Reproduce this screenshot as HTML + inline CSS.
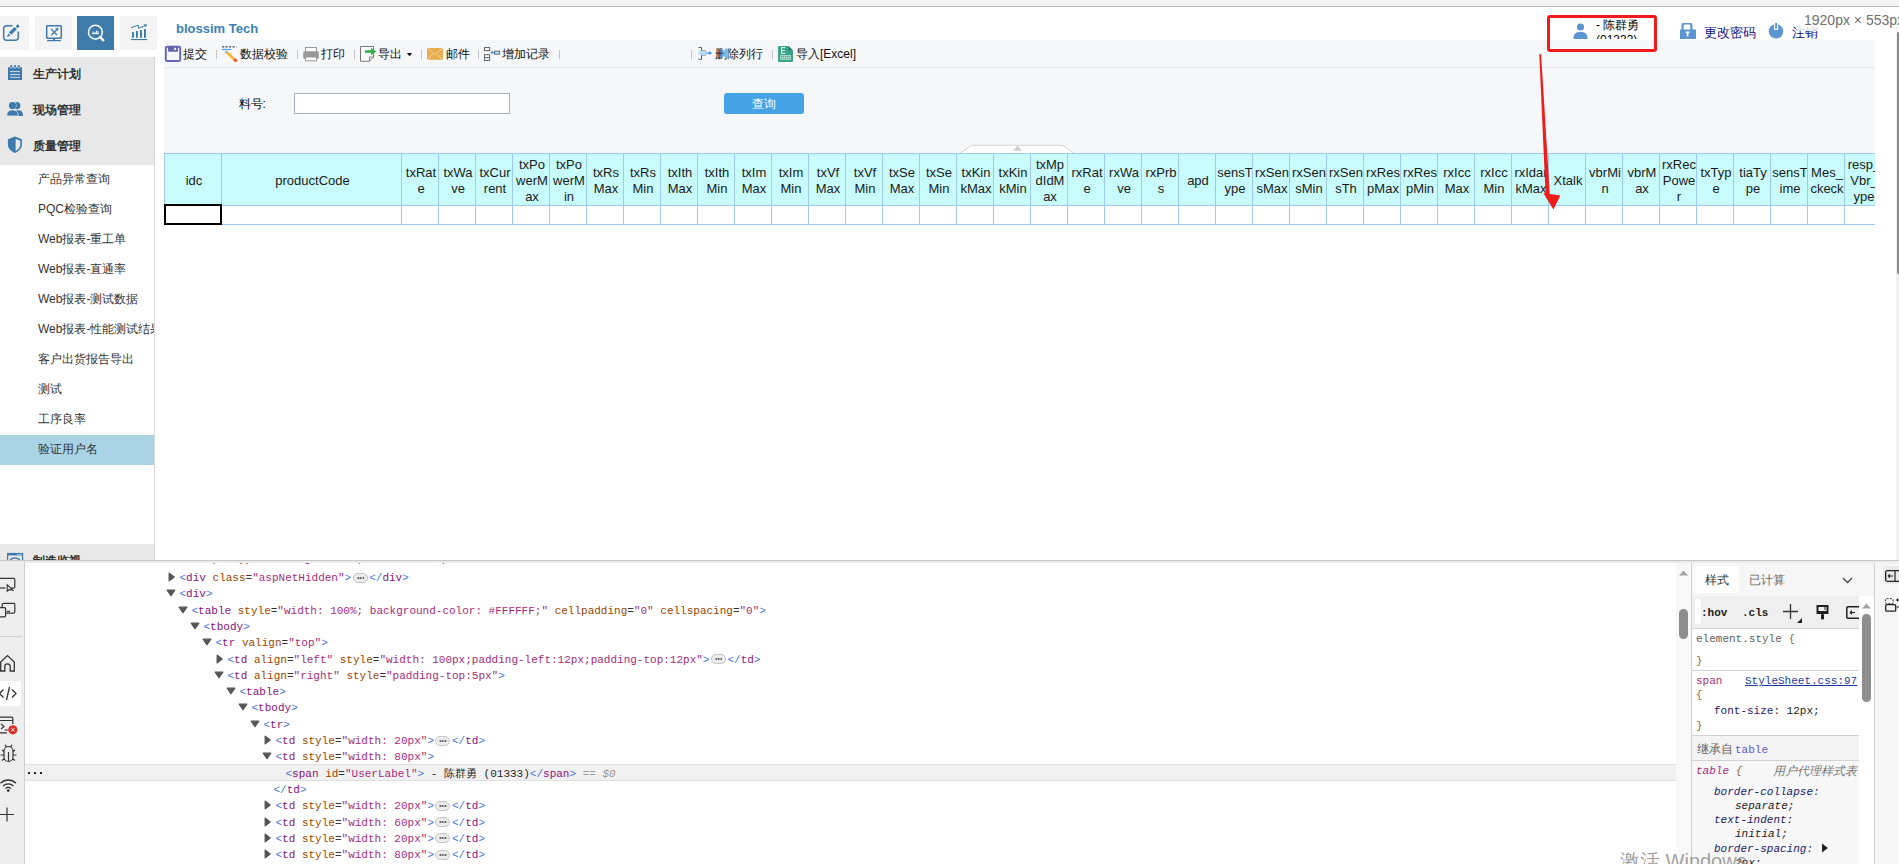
<!DOCTYPE html><html><head><meta charset="utf-8"><title>recreation</title><style>
*{box-sizing:border-box;margin:0;padding:0}
html,body{width:1899px;height:864px;overflow:hidden;background:#fff}
body{position:relative;font-family:"Liberation Sans",sans-serif;font-size:12px;color:#333}
.a{position:absolute}
.mono{font-family:"Liberation Mono",monospace;font-size:11px;white-space:pre}
</style></head><body><div class="a" style="left:0;top:0;width:1899px;height:6px;background:#f4f4f4"></div><div class="a" style="left:0;top:6px;width:1899px;height:1px;background:#bcbcbc"></div><div class="a" style="left:0px;top:16px;width:29px;height:34px;background:#f4f4f4"></div><div class="a" style="left:35px;top:16px;width:37px;height:34px;background:#f4f4f4"></div><div class="a" style="left:77px;top:16px;width:37px;height:34px;background:#3f7ba8"></div><div class="a" style="left:120px;top:16px;width:37px;height:34px;background:#f4f4f4"></div><div class="a" style="left:154px;top:57px;width:1px;height:503px;background:#d9d9d9"></div><div class="a" style="left:0;top:57px;width:154px;height:108px;background:#e8e8e8"></div><div class="a" style="left:33px;top:65.5px;height:16px;line-height:16px;font-weight:bold;color:#333;font-size:12px">生产计划</div><div class="a" style="left:33px;top:101.5px;height:16px;line-height:16px;font-weight:bold;color:#333;font-size:12px">现场管理</div><div class="a" style="left:33px;top:137.5px;height:16px;line-height:16px;font-weight:bold;color:#333;font-size:12px">质量管理</div><div class="a" style="left:0;top:435px;width:154px;height:30px;background:#aad3e6"></div><div class="a" style="left:38px;top:170.7px;width:116px;overflow:hidden;white-space:nowrap;height:16px;line-height:16px;color:#333;font-size:12px">产品异常查询</div><div class="a" style="left:38px;top:200.7px;width:116px;overflow:hidden;white-space:nowrap;height:16px;line-height:16px;color:#333;font-size:12px">PQC检验查询</div><div class="a" style="left:38px;top:230.7px;width:116px;overflow:hidden;white-space:nowrap;height:16px;line-height:16px;color:#333;font-size:12px">Web报表-重工单</div><div class="a" style="left:38px;top:260.7px;width:116px;overflow:hidden;white-space:nowrap;height:16px;line-height:16px;color:#333;font-size:12px">Web报表-直通率</div><div class="a" style="left:38px;top:290.7px;width:116px;overflow:hidden;white-space:nowrap;height:16px;line-height:16px;color:#333;font-size:12px">Web报表-测试数据</div><div class="a" style="left:38px;top:320.7px;width:116px;overflow:hidden;white-space:nowrap;height:16px;line-height:16px;color:#333;font-size:12px">Web报表-性能测试结果</div><div class="a" style="left:38px;top:350.7px;width:116px;overflow:hidden;white-space:nowrap;height:16px;line-height:16px;color:#333;font-size:12px">客户出货报告导出</div><div class="a" style="left:38px;top:380.7px;width:116px;overflow:hidden;white-space:nowrap;height:16px;line-height:16px;color:#333;font-size:12px">测试</div><div class="a" style="left:38px;top:410.7px;width:116px;overflow:hidden;white-space:nowrap;height:16px;line-height:16px;color:#333;font-size:12px">工序良率</div><div class="a" style="left:38px;top:440.7px;width:116px;overflow:hidden;white-space:nowrap;height:16px;line-height:16px;color:#333;font-size:12px">验证用户名</div><div class="a" style="left:0;top:544px;width:154px;height:16px;background:#e8e8e8;overflow:hidden"><div class="a" style="left:33px;top:9px;font-weight:bold;line-height:16px">制造监视</div></div><div class="a" style="left:176px;top:20.5px;font-size:13px;font-weight:bold;color:#3b80b6;line-height:16px">blossim Tech</div><div class="a" style="left:164px;top:40px;width:1711px;height:520px;background:#f6f7f9"></div><div class="a" style="left:164px;top:67px;width:1711px;height:1px;background:#e3e4e6"></div><div class="a" style="left:164px;top:225px;width:1711px;height:335px;background:#fff"></div><div class="a" style="left:183px;top:46.0px;height:16px;line-height:16px;white-space:nowrap;color:#111;">提交</div><div class="a" style="left:240px;top:46.0px;height:16px;line-height:16px;white-space:nowrap;color:#111;">数据校验</div><div class="a" style="left:321px;top:46.0px;height:16px;line-height:16px;white-space:nowrap;color:#111;">打印</div><div class="a" style="left:378px;top:46.0px;height:16px;line-height:16px;white-space:nowrap;color:#111;">导出</div><div class="a" style="left:445.6px;top:46.0px;height:16px;line-height:16px;white-space:nowrap;color:#111;">邮件</div><div class="a" style="left:502.4px;top:46.0px;height:16px;line-height:16px;white-space:nowrap;color:#111;">增加记录</div><div class="a" style="left:715px;top:46.0px;height:16px;line-height:16px;white-space:nowrap;color:#111;">删除列行</div><div class="a" style="left:796px;top:46.0px;height:16px;line-height:16px;white-space:nowrap;color:#111;">导入[Excel]</div><div class="a" style="left:216px;top:50px;width:1px;height:9px;background:#c4c4c4"></div><div class="a" style="left:297px;top:50px;width:1px;height:9px;background:#c4c4c4"></div><div class="a" style="left:354px;top:50px;width:1px;height:9px;background:#c4c4c4"></div><div class="a" style="left:421px;top:50px;width:1px;height:9px;background:#c4c4c4"></div><div class="a" style="left:478px;top:50px;width:1px;height:9px;background:#c4c4c4"></div><div class="a" style="left:559px;top:50px;width:1px;height:9px;background:#c4c4c4"></div><div class="a" style="left:691px;top:50px;width:1px;height:9px;background:#c4c4c4"></div><div class="a" style="left:772px;top:50px;width:1px;height:9px;background:#c4c4c4"></div><div class="a" style="left:238.6px;top:96.0px;height:16px;line-height:16px;white-space:nowrap;color:#111;color:#000">料号:</div><div class="a" style="left:294px;top:93px;width:216px;height:21px;background:#fff;border:1px solid #a9adc8"></div><div class="a" style="left:724px;top:93px;width:80px;height:21px;background:#45a3e5;border-radius:3px;color:#fff;text-align:center;line-height:23px">查询</div><div class="a" style="left:164px;top:153px;width:1711px;height:72px;overflow:hidden"><div class="a" style="left:0;top:0;width:1711px;height:52px;background:#c8fcfc"></div><div class="a" style="left:0;top:0;width:1711px;height:1px;background:#9fc8f5"></div><div class="a" style="left:0;top:52px;width:1711px;height:20px;background:#fff"></div><div class="a" style="left:0;top:52px;width:1711px;height:1px;background:#9fc8f5"></div><div class="a" style="left:0;top:71px;width:1711px;height:1px;background:#9fc8f5"></div><div class="a" style="left:0;top:0;width:1px;height:72px;background:#9fc8f5"></div><div class="a" style="left:2px;top:20.0px;width:56px;text-align:center;font-size:13px;line-height:16px;color:#1a1a1a;white-space:nowrap">idc</div><div class="a" style="left:57px;top:0;width:1px;height:72px;background:#9fc8f5"></div><div class="a" style="left:59px;top:20.0px;width:179px;text-align:center;font-size:13px;line-height:16px;color:#1a1a1a;white-space:nowrap">productCode</div><div class="a" style="left:237px;top:0;width:1px;height:72px;background:#9fc8f5"></div><div class="a" style="left:239px;top:12.0px;width:36px;text-align:center;font-size:13px;line-height:16px;color:#1a1a1a;white-space:nowrap">txRat<br>e</div><div class="a" style="left:274px;top:0;width:1px;height:72px;background:#9fc8f5"></div><div class="a" style="left:276px;top:12.0px;width:36px;text-align:center;font-size:13px;line-height:16px;color:#1a1a1a;white-space:nowrap">txWa<br>ve</div><div class="a" style="left:311px;top:0;width:1px;height:72px;background:#9fc8f5"></div><div class="a" style="left:313px;top:12.0px;width:36px;text-align:center;font-size:13px;line-height:16px;color:#1a1a1a;white-space:nowrap">txCur<br>rent</div><div class="a" style="left:348px;top:0;width:1px;height:72px;background:#9fc8f5"></div><div class="a" style="left:350px;top:4.0px;width:36px;text-align:center;font-size:13px;line-height:16px;color:#1a1a1a;white-space:nowrap">txPo<br>werM<br>ax</div><div class="a" style="left:385px;top:0;width:1px;height:72px;background:#9fc8f5"></div><div class="a" style="left:387px;top:4.0px;width:36px;text-align:center;font-size:13px;line-height:16px;color:#1a1a1a;white-space:nowrap">txPo<br>werM<br>in</div><div class="a" style="left:422px;top:0;width:1px;height:72px;background:#9fc8f5"></div><div class="a" style="left:424px;top:12.0px;width:36px;text-align:center;font-size:13px;line-height:16px;color:#1a1a1a;white-space:nowrap">txRs<br>Max</div><div class="a" style="left:459px;top:0;width:1px;height:72px;background:#9fc8f5"></div><div class="a" style="left:461px;top:12.0px;width:36px;text-align:center;font-size:13px;line-height:16px;color:#1a1a1a;white-space:nowrap">txRs<br>Min</div><div class="a" style="left:496px;top:0;width:1px;height:72px;background:#9fc8f5"></div><div class="a" style="left:498px;top:12.0px;width:36px;text-align:center;font-size:13px;line-height:16px;color:#1a1a1a;white-space:nowrap">txIth<br>Max</div><div class="a" style="left:533px;top:0;width:1px;height:72px;background:#9fc8f5"></div><div class="a" style="left:535px;top:12.0px;width:36px;text-align:center;font-size:13px;line-height:16px;color:#1a1a1a;white-space:nowrap">txIth<br>Min</div><div class="a" style="left:570px;top:0;width:1px;height:72px;background:#9fc8f5"></div><div class="a" style="left:572px;top:12.0px;width:36px;text-align:center;font-size:13px;line-height:16px;color:#1a1a1a;white-space:nowrap">txIm<br>Max</div><div class="a" style="left:607px;top:0;width:1px;height:72px;background:#9fc8f5"></div><div class="a" style="left:609px;top:12.0px;width:36px;text-align:center;font-size:13px;line-height:16px;color:#1a1a1a;white-space:nowrap">txIm<br>Min</div><div class="a" style="left:644px;top:0;width:1px;height:72px;background:#9fc8f5"></div><div class="a" style="left:646px;top:12.0px;width:36px;text-align:center;font-size:13px;line-height:16px;color:#1a1a1a;white-space:nowrap">txVf<br>Max</div><div class="a" style="left:681px;top:0;width:1px;height:72px;background:#9fc8f5"></div><div class="a" style="left:683px;top:12.0px;width:36px;text-align:center;font-size:13px;line-height:16px;color:#1a1a1a;white-space:nowrap">txVf<br>Min</div><div class="a" style="left:718px;top:0;width:1px;height:72px;background:#9fc8f5"></div><div class="a" style="left:720px;top:12.0px;width:36px;text-align:center;font-size:13px;line-height:16px;color:#1a1a1a;white-space:nowrap">txSe<br>Max</div><div class="a" style="left:755px;top:0;width:1px;height:72px;background:#9fc8f5"></div><div class="a" style="left:757px;top:12.0px;width:36px;text-align:center;font-size:13px;line-height:16px;color:#1a1a1a;white-space:nowrap">txSe<br>Min</div><div class="a" style="left:792px;top:0;width:1px;height:72px;background:#9fc8f5"></div><div class="a" style="left:794px;top:12.0px;width:36px;text-align:center;font-size:13px;line-height:16px;color:#1a1a1a;white-space:nowrap">txKin<br>kMax</div><div class="a" style="left:829px;top:0;width:1px;height:72px;background:#9fc8f5"></div><div class="a" style="left:831px;top:12.0px;width:36px;text-align:center;font-size:13px;line-height:16px;color:#1a1a1a;white-space:nowrap">txKin<br>kMin</div><div class="a" style="left:866px;top:0;width:1px;height:72px;background:#9fc8f5"></div><div class="a" style="left:868px;top:4.0px;width:36px;text-align:center;font-size:13px;line-height:16px;color:#1a1a1a;white-space:nowrap">txMp<br>dIdM<br>ax</div><div class="a" style="left:903px;top:0;width:1px;height:72px;background:#9fc8f5"></div><div class="a" style="left:905px;top:12.0px;width:36px;text-align:center;font-size:13px;line-height:16px;color:#1a1a1a;white-space:nowrap">rxRat<br>e</div><div class="a" style="left:940px;top:0;width:1px;height:72px;background:#9fc8f5"></div><div class="a" style="left:942px;top:12.0px;width:36px;text-align:center;font-size:13px;line-height:16px;color:#1a1a1a;white-space:nowrap">rxWa<br>ve</div><div class="a" style="left:977px;top:0;width:1px;height:72px;background:#9fc8f5"></div><div class="a" style="left:979px;top:12.0px;width:36px;text-align:center;font-size:13px;line-height:16px;color:#1a1a1a;white-space:nowrap">rxPrb<br>s</div><div class="a" style="left:1014px;top:0;width:1px;height:72px;background:#9fc8f5"></div><div class="a" style="left:1016px;top:20.0px;width:36px;text-align:center;font-size:13px;line-height:16px;color:#1a1a1a;white-space:nowrap">apd</div><div class="a" style="left:1051px;top:0;width:1px;height:72px;background:#9fc8f5"></div><div class="a" style="left:1053px;top:12.0px;width:36px;text-align:center;font-size:13px;line-height:16px;color:#1a1a1a;white-space:nowrap">sensT<br>ype</div><div class="a" style="left:1088px;top:0;width:1px;height:72px;background:#9fc8f5"></div><div class="a" style="left:1090px;top:12.0px;width:36px;text-align:center;font-size:13px;line-height:16px;color:#1a1a1a;white-space:nowrap">rxSen<br>sMax</div><div class="a" style="left:1125px;top:0;width:1px;height:72px;background:#9fc8f5"></div><div class="a" style="left:1127px;top:12.0px;width:36px;text-align:center;font-size:13px;line-height:16px;color:#1a1a1a;white-space:nowrap">rxSen<br>sMin</div><div class="a" style="left:1162px;top:0;width:1px;height:72px;background:#9fc8f5"></div><div class="a" style="left:1164px;top:12.0px;width:36px;text-align:center;font-size:13px;line-height:16px;color:#1a1a1a;white-space:nowrap">rxSen<br>sTh</div><div class="a" style="left:1199px;top:0;width:1px;height:72px;background:#9fc8f5"></div><div class="a" style="left:1201px;top:12.0px;width:36px;text-align:center;font-size:13px;line-height:16px;color:#1a1a1a;white-space:nowrap">rxRes<br>pMax</div><div class="a" style="left:1236px;top:0;width:1px;height:72px;background:#9fc8f5"></div><div class="a" style="left:1238px;top:12.0px;width:36px;text-align:center;font-size:13px;line-height:16px;color:#1a1a1a;white-space:nowrap">rxRes<br>pMin</div><div class="a" style="left:1273px;top:0;width:1px;height:72px;background:#9fc8f5"></div><div class="a" style="left:1275px;top:12.0px;width:36px;text-align:center;font-size:13px;line-height:16px;color:#1a1a1a;white-space:nowrap">rxIcc<br>Max</div><div class="a" style="left:1310px;top:0;width:1px;height:72px;background:#9fc8f5"></div><div class="a" style="left:1312px;top:12.0px;width:36px;text-align:center;font-size:13px;line-height:16px;color:#1a1a1a;white-space:nowrap">rxIcc<br>Min</div><div class="a" style="left:1347px;top:0;width:1px;height:72px;background:#9fc8f5"></div><div class="a" style="left:1349px;top:12.0px;width:36px;text-align:center;font-size:13px;line-height:16px;color:#1a1a1a;white-space:nowrap">rxIdar<br>kMax</div><div class="a" style="left:1384px;top:0;width:1px;height:72px;background:#9fc8f5"></div><div class="a" style="left:1386px;top:20.0px;width:36px;text-align:center;font-size:13px;line-height:16px;color:#1a1a1a;white-space:nowrap">Xtalk</div><div class="a" style="left:1421px;top:0;width:1px;height:72px;background:#9fc8f5"></div><div class="a" style="left:1423px;top:12.0px;width:36px;text-align:center;font-size:13px;line-height:16px;color:#1a1a1a;white-space:nowrap">vbrMi<br>n</div><div class="a" style="left:1458px;top:0;width:1px;height:72px;background:#9fc8f5"></div><div class="a" style="left:1460px;top:12.0px;width:36px;text-align:center;font-size:13px;line-height:16px;color:#1a1a1a;white-space:nowrap">vbrM<br>ax</div><div class="a" style="left:1495px;top:0;width:1px;height:72px;background:#9fc8f5"></div><div class="a" style="left:1497px;top:4.0px;width:36px;text-align:center;font-size:13px;line-height:16px;color:#1a1a1a;white-space:nowrap">rxRec<br>Powe<br>r</div><div class="a" style="left:1532px;top:0;width:1px;height:72px;background:#9fc8f5"></div><div class="a" style="left:1534px;top:12.0px;width:36px;text-align:center;font-size:13px;line-height:16px;color:#1a1a1a;white-space:nowrap">txTyp<br>e</div><div class="a" style="left:1569px;top:0;width:1px;height:72px;background:#9fc8f5"></div><div class="a" style="left:1571px;top:12.0px;width:36px;text-align:center;font-size:13px;line-height:16px;color:#1a1a1a;white-space:nowrap">tiaTy<br>pe</div><div class="a" style="left:1606px;top:0;width:1px;height:72px;background:#9fc8f5"></div><div class="a" style="left:1608px;top:12.0px;width:36px;text-align:center;font-size:13px;line-height:16px;color:#1a1a1a;white-space:nowrap">sensT<br>ime</div><div class="a" style="left:1643px;top:0;width:1px;height:72px;background:#9fc8f5"></div><div class="a" style="left:1645px;top:12.0px;width:36px;text-align:center;font-size:13px;line-height:16px;color:#1a1a1a;white-space:nowrap">Mes_<br>ckeck</div><div class="a" style="left:1680px;top:0;width:1px;height:72px;background:#9fc8f5"></div><div class="a" style="left:1682px;top:4.0px;width:36px;text-align:center;font-size:13px;line-height:16px;color:#1a1a1a;white-space:nowrap">resp_<br>Vbr_<br>ype</div><div class="a" style="left:1717px;top:0;width:1px;height:72px;background:#9fc8f5"></div></div><div class="a" style="left:164px;top:204px;width:58px;height:21px;border:2px solid #000"></div><div class="a" style="left:1560px;top:16px;width:300px;height:23px;overflow:hidden"><svg class="a" style="left:13px;top:7px" width="15" height="16" viewBox="0 0 15 16"><circle cx="7.5" cy="4" r="3.6" fill="#5b95d2"/><path d="M0.5 16 C0.5 10.5 3 9 7.5 9 C12 9 14.5 10.5 14.5 16Z" fill="#5b95d2"/></svg><div class="a" style="left:36px;top:1.5px;line-height:14px;color:#000;white-space:nowrap">- 陈群勇</div><div class="a" style="left:36px;top:17px;line-height:14px;color:#000;white-space:nowrap">(01333)</div><svg class="a" style="left:120px;top:7px" width="16" height="16" viewBox="0 0 16 16"><path d="M2.6 7 V2.2 A1.8 1.8 0 0 1 4.4 0.4 H9.6 A1.8 1.8 0 0 1 11.4 2.2 V7" fill="none" stroke="#5b95d2" stroke-width="2.2"/><rect x="0" y="6.5" width="16" height="9.5" fill="#5b95d2"/><rect x="5.8" y="8.6" width="3.6" height="1.6" fill="#fff"/><rect x="6.8" y="8.6" width="1.6" height="4.8" fill="#fff"/></svg><div class="a" style="left:144px;top:8.5px;line-height:16px;font-size:13px;color:#10108a;white-space:nowrap">更改密码</div><svg class="a" style="left:208px;top:7px" width="16" height="16" viewBox="0 0 16 16"><circle cx="8" cy="8.3" r="7.2" fill="#5b95d2"/><rect x="6" y="-1" width="4.2" height="7.8" fill="#fff"/><rect x="7.1" y="-1" width="2" height="6.5" fill="#5b95d2"/></svg><div class="a" style="left:232px;top:8.5px;line-height:16px;font-size:13px;color:#10108a;white-space:nowrap">注销</div></div><div class="a" style="left:1797px;top:9px;width:102px;height:21.5px;background:rgba(255,255,255,0.8)"></div><div class="a" style="left:1804px;top:11px;font-size:14px;line-height:18px;color:#707070;white-space:nowrap">1920px × 553px</div><div class="a" style="left:1547px;top:15px;width:110px;height:37px;border:3px solid #f21b1b;border-radius:3px"></div><svg class="a" style="left:0;top:0" width="1899" height="260" viewBox="0 0 1899 260"><polygon points="1539.3,54.3 1541.1,54.3 1549.8,195 1545.6,195" fill="#f21b1b"/><polygon points="1543.3,193 1560.4,195.5 1553.4,209.5" fill="#f21b1b"/></svg><div class="a" style="left:1896px;top:27px;width:3px;height:533px;background:#f1f1f1"></div><div class="a" style="left:1897px;top:32px;width:3px;height:242px;background:#8a8a8a;border-radius:1.5px"></div><svg class="a" style="left:958px;top:144px" width="118" height="9" viewBox="0 0 118 9"><path d="M2.3 9 L13.7 1.3 H104.3 L115.7 9" fill="#fff" stroke="#d4d4d4" stroke-width="1"/><polygon points="55,6.8 59.4,1.6 63.8,6.8" fill="#cfcfcf"/></svg><div class="a" style="left:0;top:560px;width:1899px;height:304px;background:#fff"></div><div class="a" style="left:0;top:560px;width:1899px;height:1px;background:#c5c7cb"></div><div class="a" style="left:0;top:561px;width:24px;height:303px;background:#eeeeee"></div><div class="a" style="left:24px;top:561px;width:1px;height:303px;background:#cfcfcf"></div><div class="a" style="left:0;top:636px;width:22px;height:1px;background:#cfcfcf"></div><div class="a" style="left:0;top:681px;width:21px;height:25px;background:#fff;border-radius:0 3px 3px 0"></div><div class="a" style="left:1676px;top:563px;width:15px;height:301px;background:#f8f8f8"></div><svg class="a" style="left:1679px;top:570px" width="9" height="6" viewBox="0 0 9 6"><polygon points="0,5.5 4.5,0.5 9,5.5" fill="#a3a3a3"/></svg><div class="a" style="left:1679px;top:609px;width:9px;height:30px;background:#8e8e8e;border-radius:4.5px"></div><div class="a" style="left:1691px;top:563px;width:1px;height:301px;background:#cfcfcf"></div><div class="a" style="left:1692px;top:563px;width:182px;height:33px;background:#f6f6f6"></div><div class="a" style="left:1695px;top:566px;width:44px;height:27px;background:#fff;border-radius:3px"></div><div class="a" style="left:1874px;top:563px;width:1px;height:301px;background:#cfcfcf"></div><div class="a" style="left:1875px;top:563px;width:24px;height:301px;background:#f6f6f6"></div><div class="a" style="left:25px;top:561px;width:1874px;height:2px;background:#ebebeb"></div><div class="a" style="left:25px;top:563px;width:1651px;height:301px;overflow:hidden"><div class="a" style="left:0;top:201px;width:1651px;height:17px;background:#f1f1f1;border-top:1px solid #e0e0e0;border-bottom:1px solid #e0e0e0"></div><div class="a" style="left:2.6px;top:209px;width:2px;height:2px;background:#111;border-radius:0.6px"></div><div class="a" style="left:8.8px;top:209px;width:2px;height:2px;background:#111;border-radius:0.6px"></div><div class="a" style="left:15.2px;top:209px;width:2px;height:2px;background:#111;border-radius:0.6px"></div><svg class="a" style="left:143.0px;top:-10.299999999999955px" width="8" height="10" viewBox="0 0 8 10"><polygon points="1.2,1.2 6.2,5 1.2,8.8" fill="#555" stroke="#555" stroke-width="1.3" stroke-linejoin="round"/></svg><div class="a mono" style="left:154.5px;top:-12.299999999999955px;line-height:16px;height:16px"><span style="color:#4a76de">&lt;</span><span style="color:#881280">script</span><span style="color:#1f1f1f"> </span><span style="color:#994500">type</span><span style="color:#333">=</span><span style="color:#a52c7c">&quot;text/javascript&quot;</span><span style="color:#4a76de">&gt;</span><span style="display:inline-block;width:15px;height:10px;margin:0 1.5px;vertical-align:-1.5px;background:#ececec;border:1px solid #c4c4c4;border-radius:5px;position:relative"><span style="position:absolute;left:3px;top:3px;width:7.5px;height:2px;background:radial-gradient(circle,#444 0.8px,transparent 1.05px) 0 0/2.5px 2px repeat-x"></span></span><span style="color:#4a76de">&lt;/</span><span style="color:#881280">script</span><span style="color:#4a76de">&gt;</span></div><svg class="a" style="left:143.0px;top:9.0px" width="8" height="10" viewBox="0 0 8 10"><polygon points="1.2,1.2 6.2,5 1.2,8.8" fill="#555" stroke="#555" stroke-width="1.3" stroke-linejoin="round"/></svg><div class="a mono" style="left:154.5px;top:7.0px;line-height:16px;height:16px"><span style="color:#4a76de">&lt;</span><span style="color:#881280">div</span><span style="color:#1f1f1f"> </span><span style="color:#994500">class</span><span style="color:#333">=</span><span style="color:#a52c7c">&quot;aspNetHidden&quot;</span><span style="color:#4a76de">&gt;</span><span style="display:inline-block;width:15px;height:10px;margin:0 1.5px;vertical-align:-1.5px;background:#ececec;border:1px solid #c4c4c4;border-radius:5px;position:relative"><span style="position:absolute;left:3px;top:3px;width:7.5px;height:2px;background:radial-gradient(circle,#444 0.8px,transparent 1.05px) 0 0/2.5px 2px repeat-x"></span></span><span style="color:#4a76de">&lt;/</span><span style="color:#881280">div</span><span style="color:#4a76de">&gt;</span></div><svg class="a" style="left:141.0px;top:26.299999999999955px" width="10" height="8" viewBox="0 0 10 8"><polygon points="1.2,1.2 8.8,1.2 5,6.6" fill="#555" stroke="#555" stroke-width="1.3" stroke-linejoin="round"/></svg><div class="a mono" style="left:154.5px;top:23.299999999999955px;line-height:16px;height:16px"><span style="color:#4a76de">&lt;</span><span style="color:#881280">div</span><span style="color:#4a76de">&gt;</span></div><svg class="a" style="left:153.0px;top:42.60000000000002px" width="10" height="8" viewBox="0 0 10 8"><polygon points="1.2,1.2 8.8,1.2 5,6.6" fill="#555" stroke="#555" stroke-width="1.3" stroke-linejoin="round"/></svg><div class="a mono" style="left:166.5px;top:39.60000000000002px;line-height:16px;height:16px"><span style="color:#4a76de">&lt;</span><span style="color:#881280">table</span><span style="color:#1f1f1f"> </span><span style="color:#994500">style</span><span style="color:#333">=</span><span style="color:#a52c7c">&quot;width: 100%; background-color: #FFFFFF;&quot;</span><span style="color:#1f1f1f"> </span><span style="color:#994500">cellpadding</span><span style="color:#333">=</span><span style="color:#a52c7c">&quot;0&quot;</span><span style="color:#1f1f1f"> </span><span style="color:#994500">cellspacing</span><span style="color:#333">=</span><span style="color:#a52c7c">&quot;0&quot;</span><span style="color:#4a76de">&gt;</span></div><svg class="a" style="left:165.0px;top:58.89999999999998px" width="10" height="8" viewBox="0 0 10 8"><polygon points="1.2,1.2 8.8,1.2 5,6.6" fill="#555" stroke="#555" stroke-width="1.3" stroke-linejoin="round"/></svg><div class="a mono" style="left:178.5px;top:55.89999999999998px;line-height:16px;height:16px"><span style="color:#4a76de">&lt;</span><span style="color:#881280">tbody</span><span style="color:#4a76de">&gt;</span></div><svg class="a" style="left:177.0px;top:75.20000000000005px" width="10" height="8" viewBox="0 0 10 8"><polygon points="1.2,1.2 8.8,1.2 5,6.6" fill="#555" stroke="#555" stroke-width="1.3" stroke-linejoin="round"/></svg><div class="a mono" style="left:190.5px;top:72.20000000000005px;line-height:16px;height:16px"><span style="color:#4a76de">&lt;</span><span style="color:#881280">tr</span><span style="color:#1f1f1f"> </span><span style="color:#994500">valign</span><span style="color:#333">=</span><span style="color:#a52c7c">&quot;top&quot;</span><span style="color:#4a76de">&gt;</span></div><svg class="a" style="left:191.0px;top:90.5px" width="8" height="10" viewBox="0 0 8 10"><polygon points="1.2,1.2 6.2,5 1.2,8.8" fill="#555" stroke="#555" stroke-width="1.3" stroke-linejoin="round"/></svg><div class="a mono" style="left:202.5px;top:88.5px;line-height:16px;height:16px"><span style="color:#4a76de">&lt;</span><span style="color:#881280">td</span><span style="color:#1f1f1f"> </span><span style="color:#994500">align</span><span style="color:#333">=</span><span style="color:#a52c7c">&quot;left&quot;</span><span style="color:#1f1f1f"> </span><span style="color:#994500">style</span><span style="color:#333">=</span><span style="color:#a52c7c">&quot;width: 100px;padding-left:12px;padding-top:12px&quot;</span><span style="color:#4a76de">&gt;</span><span style="display:inline-block;width:15px;height:10px;margin:0 1.5px;vertical-align:-1.5px;background:#ececec;border:1px solid #c4c4c4;border-radius:5px;position:relative"><span style="position:absolute;left:3px;top:3px;width:7.5px;height:2px;background:radial-gradient(circle,#444 0.8px,transparent 1.05px) 0 0/2.5px 2px repeat-x"></span></span><span style="color:#4a76de">&lt;/</span><span style="color:#881280">td</span><span style="color:#4a76de">&gt;</span></div><svg class="a" style="left:189.0px;top:107.79999999999995px" width="10" height="8" viewBox="0 0 10 8"><polygon points="1.2,1.2 8.8,1.2 5,6.6" fill="#555" stroke="#555" stroke-width="1.3" stroke-linejoin="round"/></svg><div class="a mono" style="left:202.5px;top:104.79999999999995px;line-height:16px;height:16px"><span style="color:#4a76de">&lt;</span><span style="color:#881280">td</span><span style="color:#1f1f1f"> </span><span style="color:#994500">align</span><span style="color:#333">=</span><span style="color:#a52c7c">&quot;right&quot;</span><span style="color:#1f1f1f"> </span><span style="color:#994500">style</span><span style="color:#333">=</span><span style="color:#a52c7c">&quot;padding-top:5px&quot;</span><span style="color:#4a76de">&gt;</span></div><svg class="a" style="left:201.0px;top:124.10000000000002px" width="10" height="8" viewBox="0 0 10 8"><polygon points="1.2,1.2 8.8,1.2 5,6.6" fill="#555" stroke="#555" stroke-width="1.3" stroke-linejoin="round"/></svg><div class="a mono" style="left:214.5px;top:121.10000000000002px;line-height:16px;height:16px"><span style="color:#4a76de">&lt;</span><span style="color:#881280">table</span><span style="color:#4a76de">&gt;</span></div><svg class="a" style="left:213.0px;top:140.39999999999998px" width="10" height="8" viewBox="0 0 10 8"><polygon points="1.2,1.2 8.8,1.2 5,6.6" fill="#555" stroke="#555" stroke-width="1.3" stroke-linejoin="round"/></svg><div class="a mono" style="left:226.5px;top:137.39999999999998px;line-height:16px;height:16px"><span style="color:#4a76de">&lt;</span><span style="color:#881280">tbody</span><span style="color:#4a76de">&gt;</span></div><svg class="a" style="left:225.0px;top:156.70000000000005px" width="10" height="8" viewBox="0 0 10 8"><polygon points="1.2,1.2 8.8,1.2 5,6.6" fill="#555" stroke="#555" stroke-width="1.3" stroke-linejoin="round"/></svg><div class="a mono" style="left:238.5px;top:153.70000000000005px;line-height:16px;height:16px"><span style="color:#4a76de">&lt;</span><span style="color:#881280">tr</span><span style="color:#4a76de">&gt;</span></div><svg class="a" style="left:239.0px;top:172.0px" width="8" height="10" viewBox="0 0 8 10"><polygon points="1.2,1.2 6.2,5 1.2,8.8" fill="#555" stroke="#555" stroke-width="1.3" stroke-linejoin="round"/></svg><div class="a mono" style="left:250.5px;top:170.0px;line-height:16px;height:16px"><span style="color:#4a76de">&lt;</span><span style="color:#881280">td</span><span style="color:#1f1f1f"> </span><span style="color:#994500">style</span><span style="color:#333">=</span><span style="color:#a52c7c">&quot;width: 20px&quot;</span><span style="color:#4a76de">&gt;</span><span style="display:inline-block;width:15px;height:10px;margin:0 1.5px;vertical-align:-1.5px;background:#ececec;border:1px solid #c4c4c4;border-radius:5px;position:relative"><span style="position:absolute;left:3px;top:3px;width:7.5px;height:2px;background:radial-gradient(circle,#444 0.8px,transparent 1.05px) 0 0/2.5px 2px repeat-x"></span></span><span style="color:#4a76de">&lt;/</span><span style="color:#881280">td</span><span style="color:#4a76de">&gt;</span></div><svg class="a" style="left:237.0px;top:189.29999999999995px" width="10" height="8" viewBox="0 0 10 8"><polygon points="1.2,1.2 8.8,1.2 5,6.6" fill="#555" stroke="#555" stroke-width="1.3" stroke-linejoin="round"/></svg><div class="a mono" style="left:250.5px;top:186.29999999999995px;line-height:16px;height:16px"><span style="color:#4a76de">&lt;</span><span style="color:#881280">td</span><span style="color:#1f1f1f"> </span><span style="color:#994500">style</span><span style="color:#333">=</span><span style="color:#a52c7c">&quot;width: 80px&quot;</span><span style="color:#4a76de">&gt;</span></div><div class="a mono" style="left:260.5px;top:202.60000000000002px;line-height:16px;height:16px"><span style="color:#4a76de">&lt;</span><span style="color:#881280">span</span><span style="color:#1f1f1f"> </span><span style="color:#994500">id</span><span style="color:#333">=</span><span style="color:#a52c7c">&quot;UserLabel&quot;</span><span style="color:#4a76de">&gt;</span><span style="color:#1f1f1f"> </span><span style="color:#1f1f1f">-</span><span style="color:#1f1f1f"> </span><span style="color:#1f1f1f">陈群勇</span><span style="color:#1f1f1f"> </span><span style="color:#1f1f1f">(01333)</span><span style="color:#4a76de">&lt;/</span><span style="color:#881280">span</span><span style="color:#4a76de">&gt;</span><span style="color:#9a9a9a;font-style:italic"> == $0</span></div><div class="a mono" style="left:248.5px;top:218.89999999999998px;line-height:16px;height:16px"><span style="color:#4a76de">&lt;/</span><span style="color:#881280">td</span><span style="color:#4a76de">&gt;</span></div><svg class="a" style="left:239.0px;top:237.20000000000005px" width="8" height="10" viewBox="0 0 8 10"><polygon points="1.2,1.2 6.2,5 1.2,8.8" fill="#555" stroke="#555" stroke-width="1.3" stroke-linejoin="round"/></svg><div class="a mono" style="left:250.5px;top:235.20000000000005px;line-height:16px;height:16px"><span style="color:#4a76de">&lt;</span><span style="color:#881280">td</span><span style="color:#1f1f1f"> </span><span style="color:#994500">style</span><span style="color:#333">=</span><span style="color:#a52c7c">&quot;width: 20px&quot;</span><span style="color:#4a76de">&gt;</span><span style="display:inline-block;width:15px;height:10px;margin:0 1.5px;vertical-align:-1.5px;background:#ececec;border:1px solid #c4c4c4;border-radius:5px;position:relative"><span style="position:absolute;left:3px;top:3px;width:7.5px;height:2px;background:radial-gradient(circle,#444 0.8px,transparent 1.05px) 0 0/2.5px 2px repeat-x"></span></span><span style="color:#4a76de">&lt;/</span><span style="color:#881280">td</span><span style="color:#4a76de">&gt;</span></div><svg class="a" style="left:239.0px;top:253.5px" width="8" height="10" viewBox="0 0 8 10"><polygon points="1.2,1.2 6.2,5 1.2,8.8" fill="#555" stroke="#555" stroke-width="1.3" stroke-linejoin="round"/></svg><div class="a mono" style="left:250.5px;top:251.5px;line-height:16px;height:16px"><span style="color:#4a76de">&lt;</span><span style="color:#881280">td</span><span style="color:#1f1f1f"> </span><span style="color:#994500">style</span><span style="color:#333">=</span><span style="color:#a52c7c">&quot;width: 60px&quot;</span><span style="color:#4a76de">&gt;</span><span style="display:inline-block;width:15px;height:10px;margin:0 1.5px;vertical-align:-1.5px;background:#ececec;border:1px solid #c4c4c4;border-radius:5px;position:relative"><span style="position:absolute;left:3px;top:3px;width:7.5px;height:2px;background:radial-gradient(circle,#444 0.8px,transparent 1.05px) 0 0/2.5px 2px repeat-x"></span></span><span style="color:#4a76de">&lt;/</span><span style="color:#881280">td</span><span style="color:#4a76de">&gt;</span></div><svg class="a" style="left:239.0px;top:269.79999999999995px" width="8" height="10" viewBox="0 0 8 10"><polygon points="1.2,1.2 6.2,5 1.2,8.8" fill="#555" stroke="#555" stroke-width="1.3" stroke-linejoin="round"/></svg><div class="a mono" style="left:250.5px;top:267.79999999999995px;line-height:16px;height:16px"><span style="color:#4a76de">&lt;</span><span style="color:#881280">td</span><span style="color:#1f1f1f"> </span><span style="color:#994500">style</span><span style="color:#333">=</span><span style="color:#a52c7c">&quot;width: 20px&quot;</span><span style="color:#4a76de">&gt;</span><span style="display:inline-block;width:15px;height:10px;margin:0 1.5px;vertical-align:-1.5px;background:#ececec;border:1px solid #c4c4c4;border-radius:5px;position:relative"><span style="position:absolute;left:3px;top:3px;width:7.5px;height:2px;background:radial-gradient(circle,#444 0.8px,transparent 1.05px) 0 0/2.5px 2px repeat-x"></span></span><span style="color:#4a76de">&lt;/</span><span style="color:#881280">td</span><span style="color:#4a76de">&gt;</span></div><svg class="a" style="left:239.0px;top:286.1px" width="8" height="10" viewBox="0 0 8 10"><polygon points="1.2,1.2 6.2,5 1.2,8.8" fill="#555" stroke="#555" stroke-width="1.3" stroke-linejoin="round"/></svg><div class="a mono" style="left:250.5px;top:284.1px;line-height:16px;height:16px"><span style="color:#4a76de">&lt;</span><span style="color:#881280">td</span><span style="color:#1f1f1f"> </span><span style="color:#994500">style</span><span style="color:#333">=</span><span style="color:#a52c7c">&quot;width: 80px&quot;</span><span style="color:#4a76de">&gt;</span><span style="display:inline-block;width:15px;height:10px;margin:0 1.5px;vertical-align:-1.5px;background:#ececec;border:1px solid #c4c4c4;border-radius:5px;position:relative"><span style="position:absolute;left:3px;top:3px;width:7.5px;height:2px;background:radial-gradient(circle,#444 0.8px,transparent 1.05px) 0 0/2.5px 2px repeat-x"></span></span><span style="color:#4a76de">&lt;/</span><span style="color:#881280">td</span><span style="color:#4a76de">&gt;</span></div></div><div class="a" style="left:1705px;top:572.0px;height:16px;line-height:16px;white-space:nowrap;color:#111;font-size:12px;color:#333">样式</div><div class="a" style="left:1749px;top:572.0px;height:16px;line-height:16px;white-space:nowrap;color:#111;font-size:12px;color:#6a6a6a">已计算</div><svg class="a" style="left:1842px;top:577px" width="11" height="7" viewBox="0 0 11 7"><path d="M1 1 L5.5 5.5 L10 1" fill="none" stroke="#444" stroke-width="1.3"/></svg><div class="a" style="left:1692px;top:596px;width:167px;height:32px;background:#efefef"></div><div class="a" style="left:1695px;top:599px;width:6px;height:25px;background:#fff;border-radius:3px"></div><div class="a" style="left:1692px;top:628px;width:167px;height:1px;background:#d3d3d3"></div><div class="a mono" style="left:1701px;top:605.0999999999999px;line-height:16px;height:16px;"><b style="color:#222">:hov</b></div><div class="a mono" style="left:1742px;top:605.0999999999999px;line-height:16px;height:16px;"><b style="color:#222">.cls</b></div><svg class="a" style="left:1783px;top:604px" width="20" height="20" viewBox="0 0 20 20"><path d="M7.5 0 V15 M0 7.5 H15" stroke="#333" stroke-width="1.3"/><polygon points="19,14 19,19 14,19" fill="#222"/></svg><svg class="a" style="left:1816px;top:605px" width="13" height="15" viewBox="0 0 13 15"><path d="M1.5 1 H11.5 V8 H1.5Z" fill="none" stroke="#222" stroke-width="2"/><rect x="1" y="6" width="11" height="3" fill="#222"/><rect x="5" y="9" width="3" height="5.5" rx="1" fill="#222"/><rect x="8" y="2" width="2" height="3" fill="#888"/></svg><svg class="a" style="left:1846px;top:606px" width="13" height="13" viewBox="0 0 13 13"><rect x="0.8" y="0.8" width="14" height="11.4" rx="1" fill="none" stroke="#222" stroke-width="1.5"/><path d="M4 6.5 H9 M4 6.5 L6 4.8 M4 6.5 L6 8.2" stroke="#222" stroke-width="1.2" fill="none"/></svg><svg class="a" style="left:1862px;top:603px" width="9" height="6" viewBox="0 0 9 6"><polygon points="0,5.5 4.5,0.5 9,5.5" fill="#a3a3a3"/></svg><div class="a" style="left:1862px;top:614px;width:9px;height:88px;background:#8e8e8e;border-radius:4.5px"></div><div class="a mono" style="left:1696px;top:631.1999999999999px;line-height:16px;height:16px;"><span style="color:#5f5f5f">element.style</span> <span style="color:#8b6b3e">{</span></div><div class="a mono" style="left:1696px;top:652.8px;line-height:16px;height:16px;"><span style="color:#8b6b3e">}</span></div><div class="a" style="left:1692px;top:670px;width:167px;height:1px;background:#d3d3d3"></div><div class="a mono" style="left:1696px;top:673.1999999999999px;line-height:16px;height:16px;"><span style="color:#a52c7c">span</span></div><div class="a mono" style="left:1745px;top:673.1999999999999px;line-height:16px;height:16px;"><span style="color:#1b3aa0;text-decoration:underline">StyleSheet.css:97</span></div><div class="a mono" style="left:1696px;top:687.1999999999999px;line-height:16px;height:16px;"><span style="color:#8b6b3e">{</span></div><div class="a mono" style="left:1714px;top:703.1999999999999px;line-height:16px;height:16px;"><span style="color:#1a1a6a">font-size</span><span style="color:#222">: 12px;</span></div><div class="a mono" style="left:1696px;top:717.5px;line-height:16px;height:16px;"><span style="color:#8b6b3e">}</span></div><div class="a" style="left:1692px;top:735px;width:167px;height:1px;background:#d3d3d3"></div><div class="a" style="left:1692px;top:736px;width:167px;height:24px;background:#f3f3f3"></div><div class="a" style="left:1692px;top:760px;width:167px;height:1px;background:#d3d3d3"></div><div class="a" style="left:1692px;top:761px;width:167px;height:103px;background:#f7f7f7"></div><div class="a" style="left:1697px;top:741.0px;height:16px;line-height:16px;white-space:nowrap;color:#111;font-size:12px;color:#666">继承自</div><div class="a mono" style="left:1735px;top:741.8px;line-height:16px;height:16px;"><span style="color:#5c5cd8">table</span></div><div class="a mono" style="left:1696px;top:762.8px;line-height:16px;height:16px;"><i style="color:#a52c7c">table</i> <i style="color:#8b6b3e">{</i></div><div class="a" style="left:1773px;top:763.0px;height:16px;line-height:16px;white-space:nowrap;color:#111;font-size:12px;color:#777"><i>用户代理样式表</i></div><div class="a mono" style="left:1714px;top:783.8px;line-height:16px;height:16px;"><i style="color:#1a1a6a">border-collapse:</i></div><div class="a mono" style="left:1735px;top:797.8px;line-height:16px;height:16px;"><i style="color:#222">separate;</i></div><div class="a mono" style="left:1714px;top:811.8px;line-height:16px;height:16px;"><i style="color:#1a1a6a">text-indent:</i></div><div class="a mono" style="left:1735px;top:825.8px;line-height:16px;height:16px;"><i style="color:#222">initial;</i></div><div class="a mono" style="left:1714px;top:840.8px;line-height:16px;height:16px;"><i style="color:#1a1a6a">border-spacing:</i></div><div class="a mono" style="left:1735px;top:854.8px;line-height:16px;height:16px;"><i style="color:#222">2px;</i></div><svg class="a" style="left:1821px;top:843px" width="8" height="10" viewBox="0 0 8 10"><polygon points="1,0.5 7,5 1,9.5" fill="#222"/></svg><div class="a" style="left:1883px;top:566px;width:16px;height:18px;background:#e9e9e9;border-radius:3px 0 0 3px"></div><svg class="a" style="left:1885px;top:570px" width="14" height="12" viewBox="0 0 14 12"><rect x="0.7" y="0.7" width="16" height="10.6" rx="1.5" fill="none" stroke="#222" stroke-width="1.3"/><path d="M10 0.7 V11.3" stroke="#222" stroke-width="1.2"/><path d="M3 6 H8 M3 6 L5 4.3 M3 6 L5 7.7" stroke="#222" stroke-width="1.1" fill="none"/></svg><svg class="a" style="left:1885px;top:598px" width="14" height="14" viewBox="0 0 14 14"><rect x="0.6" y="0.6" width="7.5" height="5" rx="1" fill="none" stroke="#333" stroke-width="1" stroke-dasharray="2 1.3"/><rect x="0.7" y="6.7" width="10" height="6.5" rx="1" fill="none" stroke="#222" stroke-width="1.3"/><path d="M11 2 H14 M12.5 0.5 V3.5" stroke="#222" stroke-width="1"/><path d="M11.5 9 H14" stroke="#222" stroke-width="1"/></svg><div class="a" style="left:1620px;top:849px;font-size:20px;line-height:24px;color:rgba(130,130,130,0.75);white-space:nowrap">激活 Windows</div><svg class="a" style="left:0;top:16px" width="160" height="34" viewBox="0 16 160 34">
<path d="M12.6 25.7 H6.5 A3 3 0 0 0 3.7 28.5 V37.5 A3 3 0 0 0 6.5 40.3 H15.5 A3 3 0 0 0 18.3 37.5 V31.6" fill="none" stroke="#3d7aab" stroke-width="1.5"/>
<path d="M10.1 33.7 L15.7 28.1" stroke="#3d7aab" stroke-width="3.3"/>
<polygon points="7,36.9 8.2,33.4 10.5,35.7" fill="#3d7aab"/>
<rect x="16.3" y="24.9" width="2.7" height="2.7" transform="rotate(45 17.65 26.25)" fill="#3d7aab"/>
<rect x="46.7" y="25.7" width="14.6" height="12.6" rx="0.8" fill="none" stroke="#3d7aab" stroke-width="1.5"/>
<rect x="53" y="38.3" width="2" height="1.7" fill="#3d7aab"/>
<rect x="47" y="40" width="14" height="1.2" rx="0.6" fill="#3d7aab"/>
<path d="M51 29 L57 35 M57.3 29.2 L51.3 35.2" stroke="#3d7aab" stroke-width="1.3"/>
<path d="M55.5 28.5 L58 28.2 L57.6 30.6" fill="none" stroke="#3d7aab" stroke-width="1"/>
<circle cx="95.4" cy="32.2" r="6.9" fill="none" stroke="#fff" stroke-width="1.5"/>
<path d="M100.3 37.2 L103.3 40.3" stroke="#fff" stroke-width="2.4" stroke-linecap="round"/>
<path d="M92 33.7 H99" stroke="#fff" stroke-width="1"/>
<path d="M93 33.5 V31.5 M95 33.5 V32 M96.5 33.5 V30.5 M98 33.5 V31" stroke="#fff" stroke-width="0.9"/>
<rect x="132" y="32" width="1.9" height="5.8" fill="#3d7aab"/>
<rect x="136" y="31" width="1.9" height="6.8" fill="#3d7aab"/>
<rect x="140" y="30" width="1.9" height="7.8" fill="#3d7aab"/>
<rect x="144" y="29" width="1.9" height="8.8" fill="#3d7aab"/>
<rect x="131" y="39" width="16" height="1.1" fill="#3d7aab"/>
<path d="M131 27.6 L138.3 25.2 L138.6 28.4 L145.5 25.4" fill="none" stroke="#3d7aab" stroke-width="1"/>
<polygon points="147.2,24.5 143.6,24.3 145.6,27.2" fill="#3d7aab"/>
</svg><svg class="a" style="left:0;top:60px" width="30" height="100" viewBox="0 60 30 100">
<rect x="8" y="67.3" width="14" height="12.7" fill="#3d7aab"/>
<rect x="10.3" y="65.2" width="2" height="3" fill="#3d7aab"/><rect x="14" y="65.2" width="2" height="3" fill="#3d7aab"/><rect x="17.7" y="65.2" width="2" height="3" fill="#3d7aab"/>
<rect x="10" y="71.2" width="10" height="0.9" fill="#e8e8e8"/><rect x="10" y="74" width="10" height="0.9" fill="#e8e8e8"/><rect x="10" y="76.8" width="10" height="0.9" fill="#e8e8e8"/>
<rect x="10.3" y="67.4" width="2" height="0.8" fill="#e8e8e8"/><rect x="14" y="67.4" width="2" height="0.8" fill="#e8e8e8"/><rect x="17.7" y="67.4" width="2" height="0.8" fill="#e8e8e8"/>
<circle cx="16.8" cy="105.6" r="3.6" fill="#3d7aab"/>
<path d="M15 116 C15 112 15.5 110.3 18 110.3 C21.5 110.3 23 112 23 116 Z" fill="#3d7aab"/>
<circle cx="12.5" cy="105.6" r="4" fill="#e8e8e8"/>
<circle cx="12.5" cy="105.6" r="3.6" fill="#3d7aab"/>
<path d="M6.8 116 C6.8 112 8.5 110 12.5 110 C16.5 110 18.2 112 18.2 116 Z" fill="#3d7aab" stroke="#e8e8e8" stroke-width="0.8"/>
<path d="M14.9 136.6 L21.9 139.3 V144.5 C21.9 148.5 19 151.3 14.9 152.9 C10.8 151.3 7.9 148.5 7.9 144.5 V139.3 Z" fill="#3d7aab"/>
<path d="M15.6 139 L20.3 140.8 V144.5 C20.3 147.4 18.4 149.6 15.6 150.9 Z" fill="#e8e8e8"/>
</svg><svg class="a" style="left:0;top:544px" width="30" height="16" viewBox="0 544 30 16">
<rect x="7.6" y="553.5" width="15" height="10" fill="none" stroke="#3d7aab" stroke-width="1.2"/>
<rect x="7" y="553" width="16" height="2.4" fill="#3d7aab"/>
<circle cx="17.8" cy="554.3" r="0.5" fill="#fff"/><circle cx="19.4" cy="554.3" r="0.5" fill="#fff"/><circle cx="21" cy="554.3" r="0.5" fill="#fff"/>
<path d="M10 560 Q15 556 20 560" fill="none" stroke="#3d7aab" stroke-width="1.4"/>
</svg><svg class="a" style="left:160px;top:44px" width="660" height="20" viewBox="160 44 660 20">
<rect x="165.8" y="46.8" width="14.4" height="14.2" rx="1.2" fill="none" stroke="#6466ae" stroke-width="1.9"/>
<rect x="168" y="46.5" width="10" height="5.3" rx="0.8" fill="#6466ae"/>
<rect x="174.2" y="47.8" width="1.9" height="2.2" fill="#fff"/>
<path d="M222 46.9 H236.5" stroke="#222" stroke-width="1" stroke-dasharray="2.2 1.3"/>
<path d="M222 49.4 H231.5" stroke="#3d8ef0" stroke-width="1"/>
<path d="M226.6 52 L235 60" stroke="#f6b93b" stroke-width="3"/>
<path d="M234.2 59.2 L236.6 61.5" stroke="#f05a28" stroke-width="3"/>
<path d="M225.3 51 L227 52.8" stroke="#aab0b8" stroke-width="2.4"/>
<rect x="305.5" y="47.5" width="11" height="5" fill="#fff" stroke="#999" stroke-width="1"/>
<rect x="303.2" y="51.3" width="15.6" height="7.4" rx="1.5" fill="#999"/>
<rect x="305.5" y="57" width="11" height="3.8" fill="#fff" stroke="#999" stroke-width="1"/>
<path d="M360.5 46.5 H373.5 V57 L369.5 61.2 H360.5 Z" fill="#fff" stroke="#777" stroke-width="1"/>
<path d="M373.5 57 H369.5 V61.2" fill="none" stroke="#777" stroke-width="0.9"/>
<path d="M365 51.5 H372" stroke="#2eb34b" stroke-width="2.6"/>
<polygon points="371,47.8 376.2,51.5 371,55.2" fill="#2eb34b"/>
<polygon points="406.9,53 412.2,53 409.55,56.2" fill="#111"/>
<rect x="427" y="48" width="16" height="11.8" rx="1.6" fill="#e8ab4d"/>
<path d="M428 48.8 L435 54.5 L442 48.8 M428 59 L432.6 54.2 M442 59 L437.4 54.2" fill="none" stroke="#fff" stroke-width="0.6" opacity="0.85"/>
<rect x="484.5" y="47.6" width="5.2" height="3" fill="none" stroke="#555" stroke-width="0.9"/>
<rect x="484.5" y="54.7" width="5.2" height="5.8" fill="none" stroke="#555" stroke-width="0.9"/>
<path d="M484.5 57.6 H489.7" stroke="#555" stroke-width="0.9"/>
<path d="M491 52.6 H495" stroke="#2d8cf0" stroke-width="1"/>
<polygon points="490.2,52.6 492.5,50.8 492.5,54.4" fill="#2d8cf0"/>
<rect x="494.4" y="51.2" width="5.2" height="3" fill="#b9dcf8" stroke="#555" stroke-width="0.8"/>
<path d="M698.5 47.5 H701.5 V59.3 H698.5" fill="none" stroke="#555" stroke-width="1"/>
<rect x="698.5" y="50.5" width="8" height="4.8" fill="#b9dcf8"/>
<path d="M701.5 50.5 H706 M701.5 55.3 H706" stroke="#777" stroke-width="0.6"/>
<path d="M706 53 H710" stroke="#2d8cf0" stroke-width="1.1"/>
<polygon points="712,53 709.3,50.9 709.3,55.1" fill="#2d8cf0"/>
<path d="M779 46 H788.5 L793 50.5 V61 A1 1 0 0 1 792 62 H779 A1 1 0 0 1 778 61 V47 A1 1 0 0 1 779 46Z" fill="#3aa48b"/>
<path d="M788.5 46 V50.5 H793Z" fill="#2a7f6b"/>
<path d="M781.5 47.6 V53.3 M781.5 47.6 H785.2 M781.5 50.4 H784.8 M781.5 53.3 H785.2" stroke="#fff" stroke-width="1" fill="none"/>
<rect x="780" y="55" width="11" height="4.9" fill="#a5d8ca"/><circle cx="781.5" cy="56.4" r="0.6" fill="#3aa48b"/><circle cx="783.5" cy="56.4" r="0.6" fill="#3aa48b"/><circle cx="785.5" cy="56.4" r="0.6" fill="#3aa48b"/><circle cx="787.5" cy="56.4" r="0.6" fill="#3aa48b"/><circle cx="789.5" cy="56.4" r="0.6" fill="#3aa48b"/><circle cx="781.5" cy="58.5" r="0.6" fill="#3aa48b"/><circle cx="783.5" cy="58.5" r="0.6" fill="#3aa48b"/><circle cx="785.5" cy="58.5" r="0.6" fill="#3aa48b"/><circle cx="787.5" cy="58.5" r="0.6" fill="#3aa48b"/><circle cx="789.5" cy="58.5" r="0.6" fill="#3aa48b"/>
</svg><svg class="a" style="left:0;top:570px" width="24" height="260" viewBox="0 570 24 260">
<g fill="none" stroke="#333" stroke-width="1.2">
<path d="M-3 578.4 H13.6 A1.2 1.2 0 0 1 14.8 579.6 V587 A1.2 1.2 0 0 1 13.6 588.2 H10.8"/>
<path d="M-1 588 H5.5"/>
<path d="M7.2 584.8 V591.2 L8.9 589.6 L12.8 590.2 Z" stroke-width="1.1"/>
<rect x="2.2" y="603.3" width="12.6" height="9.8" rx="1.2"/>
<rect x="-4" y="607.6" width="9.6" height="9.3" rx="1.2" fill="#eeeeee"/>
<path d="M7 611.4 H10" />
<path d="M0.7 671 V662 L7.5 655.6 L14.3 662 V671 H10.2 V666.5 A2.7 2.7 0 0 0 4.8 666.5 V671 Z" stroke-width="1.3"/>
<path d="M3.5 689.5 L-0.5 693.5 L3.5 697.5 M12 689.5 L16 693.5 L12 697.5 M9.5 687 L6.5 700" stroke-width="1.3"/>
<path d="M-2 717.2 H11.6 A1.2 1.2 0 0 1 12.8 718.4 V724 M-2 720.5 H12.8 M-2 732.8 H7" />
<path d="M1 724 L4 726.5 L1 729 M4.5 730 H8" stroke-width="1.1"/>
<path d="M4 751 A4.5 4.5 0 0 1 13 751 V757 A4.5 4.5 0 0 1 4 757 Z M2 750 L4.5 752 M15 750 L12.5 752 M0.5 755 H4 M16.5 755 H13 M2 760.5 L4.5 758.5 M15 760.5 L12.5 758.5 M6.5 746.8 L5 744.8 M10.5 746.8 L12 744.8 M8.5 752 V762" stroke-width="1.2"/>
<path d="M0.5 783.2 A11 11 0 0 1 16 783.2 M3.1 786 A7.2 7.2 0 0 1 13.4 786 M5.6 788.6 A3.6 3.6 0 0 1 10.9 788.6" stroke-width="1.3"/>
<path d="M0 814.5 H14 M7 807.5 V821.5" stroke-width="1.2"/>
</g>
<circle cx="8.25" cy="790.6" r="1.3" fill="#333"/>
<circle cx="12.8" cy="729.8" r="4.6" fill="#d93025"/>
<path d="M11.2 728.2 L14.4 731.4 M14.4 728.2 L11.2 731.4" stroke="#fff" stroke-width="1"/>
</svg></body></html>
